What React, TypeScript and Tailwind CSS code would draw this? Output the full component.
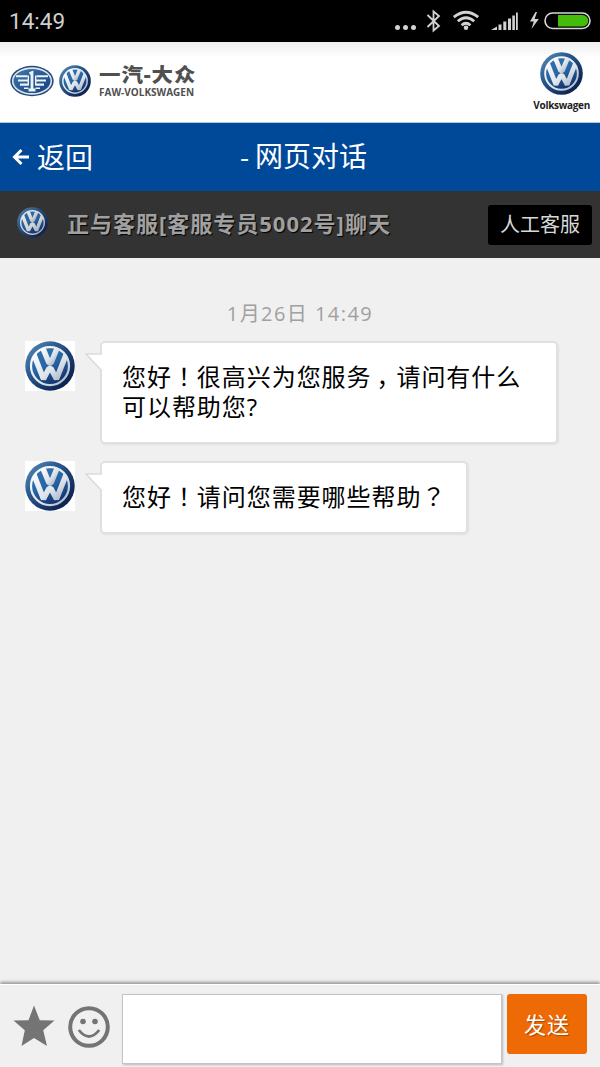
import { useId } from "react";

type Message = {
  id: number;
  lines: string[];
};

const messages: Message[] = [
  { id: 1, lines: ["您好！很高兴为您服务，请问有什么", "可以帮助您?"] },
  { id: 2, lines: ["您好！请问您需要哪些帮助？"] },
];

const VwLogo = ({ className }: { className?: string }) => {
  const id = useId();
  return (
    <svg viewBox="0 0 100 100" className={className}>
      <defs>
        <linearGradient id={`${id}rim`} x1="0" y1="0" x2="1" y2="1">
          <stop offset="0" stopColor="#5f93bd" />
          <stop offset="0.35" stopColor="#2b5c92" />
          <stop offset="0.8" stopColor="#0f2555" />
          <stop offset="1" stopColor="#0c1f4d" />
        </linearGradient>
        <linearGradient id={`${id}core`} x1="0" y1="0" x2="0.5" y2="1">
          <stop offset="0" stopColor="#3676ae" />
          <stop offset="0.55" stopColor="#2766a6" />
          <stop offset="1" stopColor="#15346f" />
        </linearGradient>
        <linearGradient id={`${id}silver`} x1="0" y1="0" x2="1" y2="1">
          <stop offset="0" stopColor="#ffffff" />
          <stop offset="0.6" stopColor="#dfe5eb" />
          <stop offset="1" stopColor="#9fafc2" />
        </linearGradient>
        <clipPath id={`${id}clip`}>
          <circle cx="50" cy="50" r="39" />
        </clipPath>
      </defs>
      <circle cx="50" cy="50" r="49.5" fill={`url(#${id}rim)`} />
      <circle
        cx="50"
        cy="50"
        r="38"
        fill={`url(#${id}core)`}
        stroke={`url(#${id}silver)`}
        strokeWidth="4.5"
      />
      <g
        clipPath={`url(#${id}clip)`}
        fill="none"
        stroke={`url(#${id}silver)`}
        strokeWidth="11"
        strokeLinejoin="bevel"
      >
        <path d="M34 10 L48 44 L52 44 L66 10" />
        <path d="M15 20 L37 76 L48 55 L52 55 L63 76 L85 20" />
      </g>
    </svg>
  );
};

const FawLogo = () => (
  <svg viewBox="0 0 44 32" className="h-8 w-11">
    <defs>
      <linearGradient id="faw" x1="0" y1="0" x2="1" y2="1">
        <stop offset="0" stopColor="#4279ae" />
        <stop offset="1" stopColor="#123f80" />
      </linearGradient>
    </defs>
    <ellipse cx="22" cy="16" rx="21.7" ry="15.2" fill="#274a79" />
    <ellipse
      cx="22"
      cy="16"
      rx="19.3"
      ry="12.9"
      fill="url(#faw)"
      stroke="#dce5ed"
      strokeWidth="1.6"
    />
    <g fill="none" stroke="#edf2f6" strokeWidth="2.1">
      <path d="M6 11.3H17.5M38 11.3H26.5M8 15.5H18M36 15.5H26M10 19.6H18M34 19.6H26" />
      <path
        d="M18.3 10.5V20.5M25.7 10.5V20.5M14 23.3H18.5M30 23.3H25.5"
        strokeWidth="1.4"
      />
      <path d="M19.5 8.5L22 7.5V25M18.5 25H25.5" strokeWidth="2.8" />
    </g>
  </svg>
);

const StatusBar = () => (
  <div className="flex h-[42px] items-center justify-between bg-black pr-2 pl-[9px] text-[#cfcfcf]">
    <span className="pt-px font-[Roboto] text-[22.5px] leading-none">14:49</span>
    <svg viewBox="0 0 200 42" className="h-[42px] w-[200px]" fill="#d2d2d2">
      <circle cx="5.5" cy="27.5" r="2.5" />
      <circle cx="13.5" cy="27.5" r="2.5" />
      <circle cx="21.5" cy="27.5" r="2.5" />
      <path
        d="M35.5 15L47 26L41.5 30.5V11.5L47 16L35.5 27"
        fill="none"
        stroke="#d2d2d2"
        strokeWidth="1.8"
      />
      <g fill="none" stroke="#d2d2d2" strokeWidth="2.8">
        <path d="M61.8 17.2Q74 7.2 86.2 17.2" />
        <path d="M65.8 21.3Q74 14.3 82.2 21.3" />
        <path d="M69.6 25.2Q74 21.3 78.4 25.2" />
      </g>
      <circle cx="74" cy="27.8" r="2.3" />
      <path d="M99 30L105 26.5V30ZM106.5 24.5H109.5V30H106.5ZM111.3 21.5H114.3V30H111.3ZM116 18.5H119V30H116ZM120.3 15.5H122.9V30H120.3ZM124 12.5H125.8V30H124Z" />
      <path d="M143.5 12L138 21.5H141.8L139.5 29L146.8 19H142.6L145 12Z" />
      <rect
        x="153"
        y="13"
        width="45"
        height="15.5"
        rx="7.7"
        fill="none"
        stroke="#d8d8d8"
        strokeWidth="1.6"
      />
      <path d="M166 15H190.5A5.75 5.75 0 0 1 190.5 26.5H166Z" fill="#43bd0a" />
    </svg>
  </div>
);

const BrandHeader = () => (
  <header className="flex h-[81px] items-start justify-between border-b border-[#b9c9df] bg-linear-to-b from-[#efefef] via-white via-20% to-white px-[10px]">
    <div className="flex pt-[23px]">
      <FawLogo />
      <VwLogo className="ml-[5px] size-8" />
      <div className="ml-2 whitespace-nowrap text-[#505050]">
        <p className="h-5 origin-left scale-y-90 text-[21.5px] leading-5 font-black tracking-[0.9px]">
          一汽-大众
        </p>
        <p className="h-[14px] text-[10px] leading-[14px] font-bold">
          FAW-VOLKSWAGEN
        </p>
      </div>
    </div>
    <div className="flex flex-col items-center pt-[10px]">
      <VwLogo className="size-[43px]" />
      <span className="mt-[3px] text-[10px] leading-[14px] font-bold tracking-[-0.3px] text-[#222]">
        Volkswagen
      </span>
    </div>
  </header>
);

const NavBar = () => (
  <nav className="grid h-[68px] grid-cols-3 items-center bg-[#004898] pb-px text-[28px] text-white">
    <a className="flex items-center pl-3">
      <svg viewBox="0 0 17 18" className="mr-2 h-[18px] w-[17px]" fill="none">
        <path
          d="M9.5 2L2.5 9L9.5 16M3 9H17"
          stroke="white"
          strokeWidth="3"
        />
      </svg>
      返回
    </a>
    <h1 className="pb-0.5 pl-[7px] text-center whitespace-nowrap">
      <span className="mr-[6px]">-</span>网页对话
    </h1>
  </nav>
);

const AgentBar = () => (
  <div className="flex h-[67px] items-center bg-[#333] pr-2 pl-[17px]">
    <VwLogo className="mb-1 size-[31px] opacity-90" />
    <p className="ml-[19px] flex-1 pb-0.5 text-[22px] font-bold tracking-[1px] whitespace-nowrap text-[#a0a0a0] [text-shadow:1px_1px_1px_#000]">
      正与客服[客服专员5002号]聊天
    </p>
    <button className="h-10 w-[104px] rounded-[3px] bg-black text-[20px] leading-10 text-[#d8d8d8]">
      人工客服
    </button>
  </div>
);

// full-width marks sit in the middle of their cell
const BubbleText = ({ text }: { text: string }) =>
  text.split(/([！，？])/).map((part, i) => {
    if (part === "，") {
      return (
        <span key={i} className="ml-[5px] tracking-[-4.05px]">
          {part}
        </span>
      );
    }
    if (part === "！" || part === "？") {
      return (
        <span key={i} lang="zh-TW" className="font-['Noto_Sans_CJK_TC',sans-serif]">
          {part}
        </span>
      );
    }
    return part;
  });

const Bubble = ({ message }: { message: Message }) => (
  <li className="flex items-start pl-[25px]">
    <div className="size-[50px] bg-white">
      <VwLogo className="size-[50px]" />
    </div>
    <div
      className={`relative ml-[25px] rounded-[5px] border-2 border-[#e0e0e0] bg-white px-5 pt-[18px] pb-5 text-[24px] leading-[30px] tracking-[0.95px] whitespace-nowrap text-black shadow-[1px_1px_2px_#e0e0e0] ${
        message.lines.length > 1 ? "w-[458px]" : ""
      }`}
    >
      <svg
        viewBox="0 0 19 24"
        className="absolute top-[8px] -left-[17px] h-6 w-[19px]"
      >
        <path d="M1 3H18V21Z" fill="white" />
        <path
          d="M17 3H1L17 20"
          fill="none"
          stroke="#dcdcdc"
          strokeWidth="1.7"
        />
      </svg>
      {message.lines.map((line) => (
        <p key={line}>
          <BubbleText text={line} />
        </p>
      ))}
    </div>
  </li>
);

const Composer = () => (
  <footer className="flex h-[83px] items-start border-t border-white bg-[#f0f0f0] pt-[10px] shadow-[0_-2px_3px_#999]">
    <svg viewBox="0 0 42 42" className="mt-[10px] ml-[13px] size-[42px]">
      <path
        d="M21 0.5L26.8 15.3L41.5 15.6L30.2 25.3L34 41L21 33L8.5 41L11.8 25.3L0.5 15.6L15.5 15.3Z"
        fill="#747474"
      />
    </svg>
    <svg
      viewBox="0 0 42 42"
      className="mt-[11px] ml-[13px] size-[42px]"
      fill="none"
      stroke="#747474"
    >
      <circle cx="21" cy="21" r="18.8" strokeWidth="4" />
      <circle cx="15" cy="15.5" r="2.8" fill="#747474" stroke="none" />
      <circle cx="27" cy="15.5" r="2.8" fill="#747474" stroke="none" />
      <path d="M10.8 24Q21 37 31.2 24" strokeWidth="2.8" />
    </svg>
    <textarea className="-mt-px ml-3 h-[70px] w-[380px] resize-none border border-[#c4c4c4] bg-white p-2 text-[24px] shadow-[1px_1px_2px_#bbb] outline-none" />
    <button className="-mt-px ml-[5px] h-[60px] w-[80px] rounded-[3px] bg-[#ee6a05] text-[22px] tracking-[1px] text-white [text-shadow:1px_1px_1px_#a54800]">
      发送
    </button>
  </footer>
);

export default function App() {
  return (
    <div
      lang="zh-CN"
      className="flex h-[1067px] w-[600px] flex-col overflow-hidden bg-[#f0f0f0] font-['Open_Sans','Noto_Sans_CJK_SC',sans-serif]"
    >
      <StatusBar />
      <BrandHeader />
      <NavBar />
      <AgentBar />
      <main className="flex-1 pt-[41px]">
        <p className="text-center text-[20px] leading-[30px] tracking-[1.45px] text-[#a0a0a0]">
          1月26日 14:49
        </p>
        <ul className="mt-3 flex flex-col gap-[17px]">
          {messages.map((message) => (
            <Bubble key={message.id} message={message} />
          ))}
        </ul>
      </main>
      <Composer />
    </div>
  );
}
